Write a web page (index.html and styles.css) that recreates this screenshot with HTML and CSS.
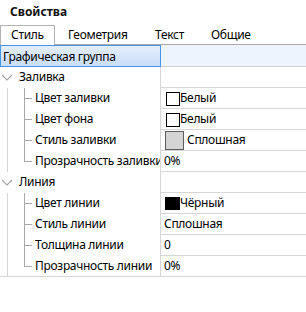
FILE: index.html
```html
<!DOCTYPE html>
<html lang="ru">
<head>
<meta charset="utf-8">
<title>Свойства</title>
<link rel="stylesheet" href="styles.css">
</head>
<body>
<div class="panel">
  <div class="title">Свойства</div>
  <div class="tabs">
    <div class="tab active t1">Стиль</div>
    <div class="tab t2">Геометрия</div>
    <div class="tab t3">Текст</div>
    <div class="tab t4">Общие</div>
    <div class="tab-fill"></div>
  </div>
  <div class="grid">
    <div class="row header">
      <div class="name">Графическая группа</div>
      <div class="value"></div>
    </div>

    <div class="row group">
      <div class="name"><svg class="chev" width="18" height="20" viewBox="0 0 18 20"><polyline points="2,8 7,13 12,8" /></svg>Заливка</div>
      <div class="value"></div>
    </div>
    <div class="row child">
      <div class="name"><span class="indent"><svg class="branch" width="26" height="21" viewBox="0 0 26 21"><line x1="16.5" y1="0" x2="16.5" y2="21" /><line x1="16" y1="10.5" x2="24" y2="10.5" /></svg></span><span class="label">Цвет заливки</span></div>
      <div class="value"><span class="swatch white"></span>Белый</div>
    </div>
    <div class="row child">
      <div class="name"><span class="indent"><svg class="branch" width="26" height="21" viewBox="0 0 26 21"><line x1="16.5" y1="0" x2="16.5" y2="21" /><line x1="16" y1="10.5" x2="24" y2="10.5" /></svg></span><span class="label">Цвет фона</span></div>
      <div class="value"><span class="swatch white"></span>Белый</div>
    </div>
    <div class="row child">
      <div class="name"><span class="indent"><svg class="branch" width="26" height="21" viewBox="0 0 26 21"><line x1="16.5" y1="0" x2="16.5" y2="21" /><line x1="16" y1="10.5" x2="24" y2="10.5" /></svg></span><span class="label">Стиль заливки</span></div>
      <div class="value"><span class="swatch solid"></span><span class="after-solid">Сплошная</span></div>
    </div>
    <div class="row child">
      <div class="name"><span class="indent"><svg class="branch" width="26" height="21" viewBox="0 0 26 21"><line x1="16.5" y1="0" x2="16.5" y2="11" /><line x1="16" y1="10.5" x2="24" y2="10.5" /></svg></span><span class="label">Прозрачность заливки</span></div>
      <div class="value">0%</div>
    </div>

    <div class="row group">
      <div class="name"><svg class="chev" width="18" height="20" viewBox="0 0 18 20"><polyline points="2,8 7,13 12,8" /></svg>Линия</div>
      <div class="value"></div>
    </div>
    <div class="row child">
      <div class="name"><span class="indent"><svg class="branch" width="26" height="21" viewBox="0 0 26 21"><line x1="16.5" y1="0" x2="16.5" y2="21" /><line x1="16" y1="10.5" x2="24" y2="10.5" /></svg></span><span class="label">Цвет линии</span></div>
      <div class="value"><span class="swatch black"></span>Чёрный</div>
    </div>
    <div class="row child">
      <div class="name"><span class="indent"><svg class="branch" width="26" height="21" viewBox="0 0 26 21"><line x1="16.5" y1="0" x2="16.5" y2="21" /><line x1="16" y1="10.5" x2="24" y2="10.5" /></svg></span><span class="label">Стиль линии</span></div>
      <div class="value">Сплошная</div>
    </div>
    <div class="row child">
      <div class="name"><span class="indent"><svg class="branch" width="26" height="21" viewBox="0 0 26 21"><line x1="16.5" y1="0" x2="16.5" y2="21" /><line x1="16" y1="10.5" x2="24" y2="10.5" /></svg></span><span class="label">Толщина линии</span></div>
      <div class="value">0</div>
    </div>
    <div class="row child last">
      <div class="name"><span class="indent"><svg class="branch" width="26" height="21" viewBox="0 0 26 21"><line x1="16.5" y1="0" x2="16.5" y2="11" /><line x1="16" y1="10.5" x2="24" y2="10.5" /></svg></span><span class="label">Прозрачность линии</span></div>
      <div class="value">0%</div>
    </div>
  </div>
</div>
</body>
</html>
```

FILE: styles.css
```css
html, body {
  margin: 0;
  padding: 0;
  background: #ffffff;
}

body {
  font-family: "Noto Sans", "Open Sans", sans-serif;
  font-size: 12px;
  letter-spacing: -0.3px;
  color: #000000;
}

.panel {
  width: 306px;
}

.title {
  height: 25px;
  box-sizing: border-box;
  padding: 4px 0 0 10px;
  line-height: 16px;
  font-weight: bold;
  letter-spacing: 0;
  color: #111111;
}

/* Tabs */
.tabs {
  display: flex;
  height: 20px;
}

.tab {
  box-sizing: border-box;
  height: 20px;
  padding-top: 2px;
  line-height: 16px;
  border-bottom: 1px solid #a9a9a9;
  white-space: nowrap;
  color: #000000;
}

.tab.active {
  padding-top: 1px;
  border: 1px solid #b3b3b3;
  border-bottom: none;
  background: #ffffff;
}

.t1 { width: 55px; padding-left: 10px; }
.t2 { width: 87px; padding-left: 13px; }
.t3 { width: 57px; padding-left: 13px; }
.t4 { width: 70px; padding-left: 12px; }

.tab-fill {
  flex: 1;
  border-bottom: 1px solid #a9a9a9;
}

/* Property grid */
.grid {
  display: flex;
  flex-direction: column;
}

.row {
  display: flex;
  height: 21px;
}

.name {
  flex: none;
  width: 161px;
  box-sizing: border-box;
  height: 21px;
  padding-bottom: 1px;
  border-right: 1px solid #d6d6d6;
  display: flex;
  align-items: center;
  line-height: 20px;
  white-space: nowrap;
  overflow: hidden;
}

.label {
  min-width: 0;
  overflow: hidden;
  white-space: nowrap;
}

.value {
  flex: 1;
  box-sizing: border-box;
  height: 21px;
  border-bottom: 1px solid #d6d6d6;
  padding-left: 3px;
  display: flex;
  align-items: center;
  line-height: 20px;
  white-space: nowrap;
}

/* Header (selected top item) */
.row.header {
  height: 22px;
}

.header .name {
  height: 22px;
  padding: 1px 0 0 2px;
  border: 1px solid #4596e6;
  background: linear-gradient(#e4eefc, #c9ddf7);
}

.header .value {
  height: 22px;
  background: #edf4fd;
  border-bottom: 1px solid #d0d0d0;
}

/* Group rows */
.chev {
  flex: none;
  margin-right: 1px;
}

.chev polyline {
  fill: none;
  stroke: #a4a4a4;
  stroke-width: 1.1;
}

/* Child rows */
.child .name {
  padding-left: 7px;
}

.indent {
  flex: none;
  align-self: flex-start;
  display: flex;
  height: 21px;
  width: 27px;
  border-left: 1px solid #d6d6d6;
}

.branch line {
  stroke: #a8a8a8;
  stroke-width: 1;
  shape-rendering: crispEdges;
}

.row.last .name {
  padding-bottom: 0;
  border-bottom: 1px solid #d6d6d6;
}

/* Swatches */
.swatch {
  flex: none;
  display: inline-block;
  box-sizing: border-box;
}

.swatch.white {
  width: 14px;
  height: 14px;
  margin-left: 2px;
  margin-top: 2px;
  border: 1px solid #000000;
  background: #ffffff;
}

.swatch.solid {
  width: 19px;
  height: 19px;
  margin-left: 1px;
  border: 1px solid #5c5c5c;
  background: #d4d4d4;
}

.after-solid {
  margin-left: 3px;
}

.swatch.black {
  width: 15px;
  height: 13px;
  margin-left: 1px;
  margin-top: 1px;
  background: #000000;
}
```
